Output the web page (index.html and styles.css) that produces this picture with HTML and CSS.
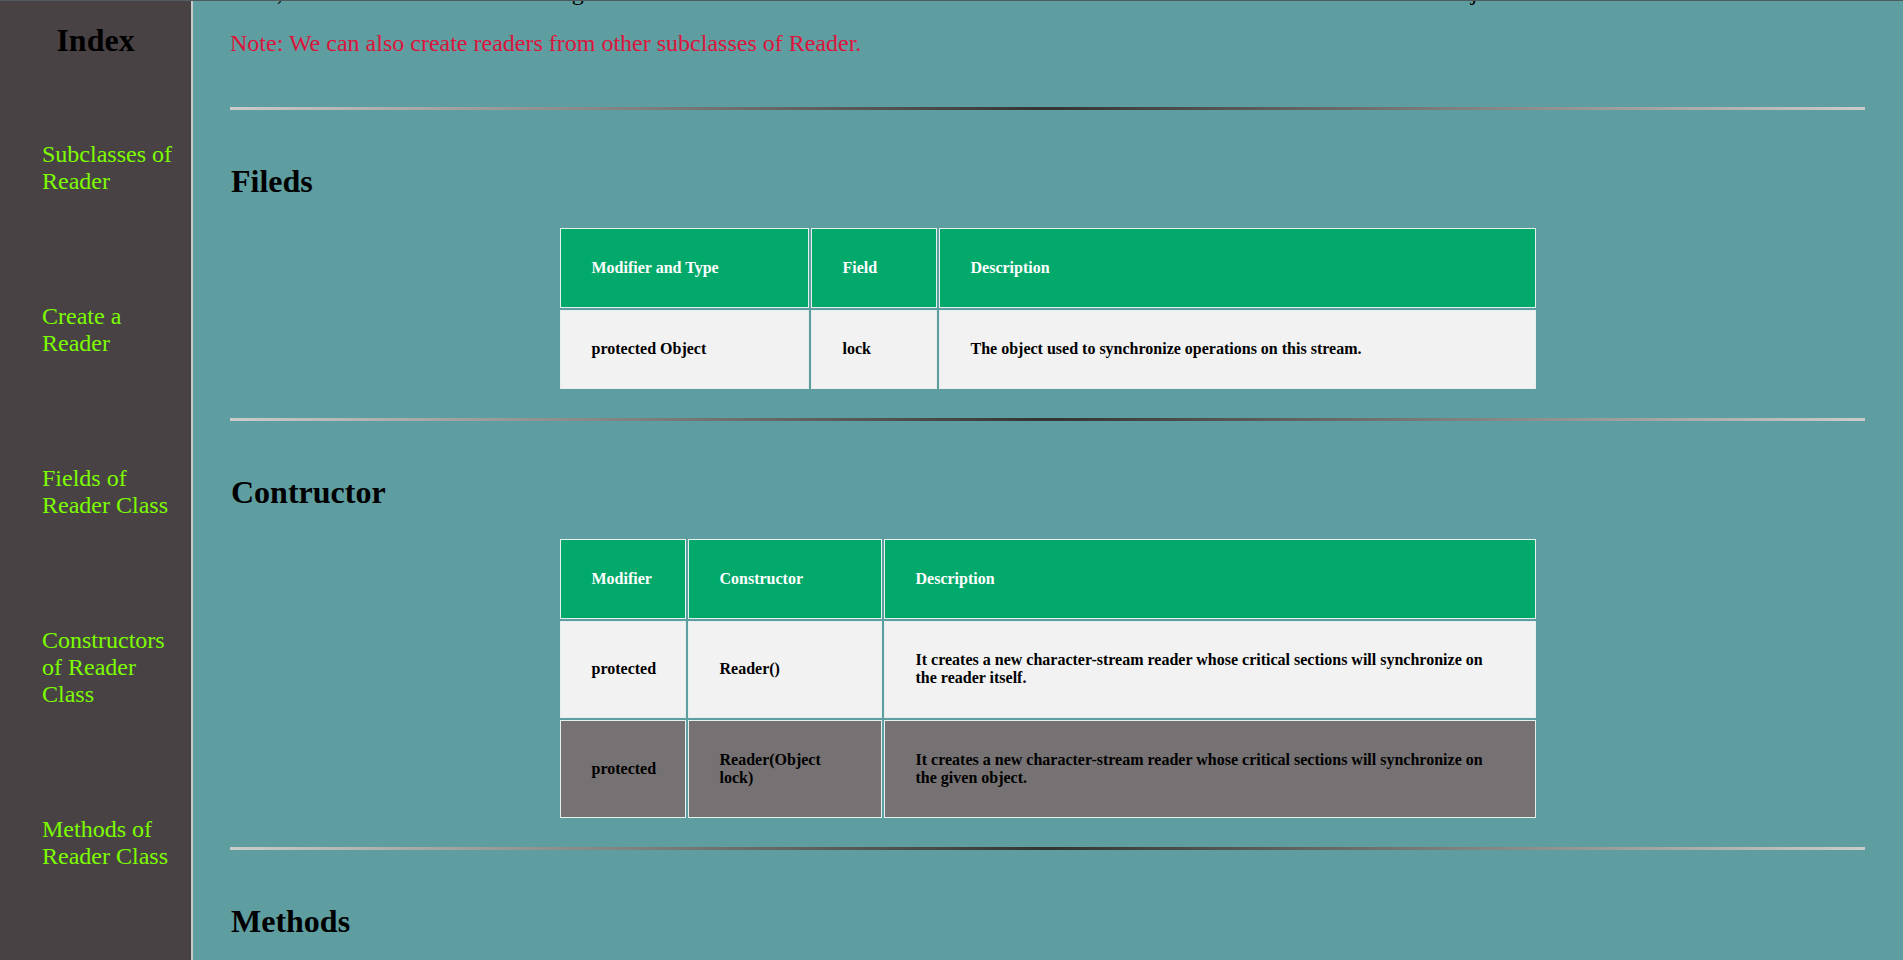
FILE: index.html
```html
<!DOCTYPE html>
<html lang="en">
<head>
<meta charset="utf-8">
<title>Java Reader Class</title>
<link rel="stylesheet" href="styles.css">
</head>
<body>
<div class="page">
  <nav class="sidebar">
    <h1 class="index-title">Index</h1>
    <ul class="index-list">
      <li><a href="#subclasses">Subclasses of Reader</a></li>
      <li><a href="#create">Create a Reader</a></li>
      <li><a href="#fields">Fields of Reader Class</a></li>
      <li><a href="#constructors">Constructors of Reader Class</a></li>
      <li><a href="#methods">Methods of Reader Class</a></li>
    </ul>
  </nav>
  <main class="content">
    <h2 class="section-title" id="subclasses">Subclasses of Reader</h2>
    <p class="text">In order to use the functionality of Reader, we can use its subclasses. Some of them are BufferedReader, InputStreamReader, FileReader and StringReader.</p>
    <h2 class="section-title" id="create">Create a Reader</h2>
    <p class="text">In order to create a Reader, we must import the java.io.Reader package first. Once we import the package, here is how we can create the reader.</p>
    <p class="text">// Creates a Reader<br>Reader input = new FileReader();</p>
    <p class="text">Here, we have created a reader using the FileReader class. It is because Reader is an abstract class. Hence we cannot create an object of Reader.</p>
    <p class="text note">Note: We can also create readers from other subclasses of Reader.</p>

    <hr class="rule">
    <h2 class="section-title" id="fields">Fileds</h2>
    <table class="doc-table">
      <thead>
        <tr>
          <th class="w-modtype">Modifier and Type</th>
          <th class="w-field">Field</th>
          <th>Description</th>
        </tr>
      </thead>
      <tbody>
        <tr class="row-light">
          <td>protected Object</td>
          <td>lock</td>
          <td>The object used to synchronize operations on this stream.</td>
        </tr>
      </tbody>
    </table>

    <hr class="rule">
    <h2 class="section-title" id="constructors">Contructor</h2>
    <table class="doc-table">
      <thead>
        <tr>
          <th class="w-mod">Modifier</th>
          <th class="w-ctor">Constructor</th>
          <th>Description</th>
        </tr>
      </thead>
      <tbody>
        <tr class="row-light">
          <td>protected</td>
          <td>Reader()</td>
          <td>It creates a new character-stream reader whose critical sections will synchronize on the reader itself.</td>
        </tr>
        <tr class="row-dark">
          <td>protected</td>
          <td>Reader(Object lock)</td>
          <td>It creates a new character-stream reader whose critical sections will synchronize on the given object.</td>
        </tr>
      </tbody>
    </table>

    <hr class="rule">
    <h2 class="section-title" id="methods">Methods</h2>
    <table class="doc-table">
      <thead>
        <tr>
          <th class="w-modtype">Modifier and Type</th>
          <th class="w-ctor">Method</th>
          <th>Description</th>
        </tr>
      </thead>
      <tbody>
        <tr class="row-light">
          <td>abstract void</td>
          <td>close()</td>
          <td>It closes the stream and releases any system resources associated with it.</td>
        </tr>
        <tr class="row-dark">
          <td>void</td>
          <td>mark(int readAheadLimit)</td>
          <td>It marks the present position in the stream.</td>
        </tr>
        <tr class="row-light">
          <td>int</td>
          <td>read()</td>
          <td>It reads a single character.</td>
        </tr>
      </tbody>
    </table>
  </main>
</div>
<script src="script.js"></script>
</body>
</html>
```
FILE: styles.css
```css
html, body {
  margin: 0;
  padding: 0;
}

body {
  border-top: 1px solid #505b60;
  background: #5f9ea0;
  font-family: "Liberation Serif", "Times New Roman", serif;
  color: #000;
}

.page {
  display: flex;
  height: calc(100vh - 1px);
}

.sidebar {
  flex: none;
  width: 191px;
  border-right: 2px solid #c8caca;
  background: #494244;
  padding-top: 21px;
  box-sizing: content-box;
}

.index-title {
  margin: 0;
  font-size: 32px;
  line-height: 37px;
  font-weight: bold;
  text-align: center;
  color: #000;
}

.index-list {
  list-style: none;
  margin: 82px 0 0;
  padding: 0 10px 0 42px;
  display: flex;
  flex-direction: column;
  gap: 108px;
}

.index-list a {
  color: #7cfc00;
  text-decoration: none;
  font-size: 24px;
  line-height: 27px;
}

.index-list li {
  font-size: 24px;
  line-height: 27px;
}

.content {
  flex: 1;
  min-width: 0;
  overflow: hidden;
  position: relative;
  padding: 0 38px 0 37px;
}

.text {
  font-size: 24px;
  line-height: 27px;
  margin: 24px 0;
}

.note {
  color: #dc143c;
  margin-bottom: 50px;
}

.rule {
  height: 3px;
  border: 0;
  margin: 0;
  background-image: linear-gradient(to right, #cccccc, #333333, #cccccc);
}

.section-title {
  font-size: 32px;
  line-height: 37px;
  font-weight: bold;
  margin: 53px 0 26px;
  padding-left: 1px;
}

.doc-table {
  width: 980px;
  margin: 0 auto 27px;
  table-layout: fixed;
  border-collapse: separate;
  border-spacing: 2px;
  font-size: 16px;
  line-height: 18px;
  font-weight: bold;
  text-align: left;
}

.doc-table th,
.doc-table td {
  box-sizing: border-box;
  border: 1px solid #e4efee;
  padding: 29.75px 31px 29.75px 31px;
  vertical-align: middle;
  text-align: left;
}

.doc-table th {
  background: #03a96b;
  color: #fff;
}

.row-light td {
  background: #f2f2f2;
}

.row-dark td {
  background: #767273;
}

.w-modtype { width: 249px; }
.w-field { width: 126px; }
.w-mod { width: 126px; }
.w-ctor { width: 194px; }
```
FILE: script.js
```js
(function () {
  var main = document.querySelector('.content');
  var note = document.querySelector('.note');
  if (main && note) {
    main.scrollTop = note.offsetTop - 29;
  }
})();
```
